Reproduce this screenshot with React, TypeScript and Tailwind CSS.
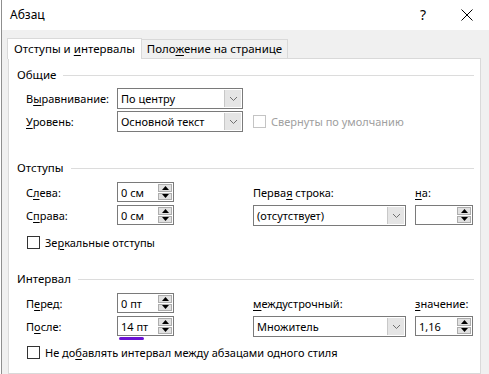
import React from 'react';

function U({ children }: { children: React.ReactNode }) {
  return <span className="underline underline-offset-2 decoration-1">{children}</span>;
}

function Chevron() {
  return (
    <svg width="9" height="6" viewBox="0 0 9 6" className="block">
      <path d="M1 1 L4.5 4.5 L8 1" fill="none" stroke="#707070" strokeWidth="1" />
    </svg>
  );
}

function Select({ value, width }: { value: string; width: string }) {
  return (
    <div className={`${width} h-[21px] border border-[#7a7a7a] bg-white flex items-stretch`}>
      <div className="flex-1 flex items-center pl-[3px] leading-none">{value}</div>
      <div className="w-[17px] m-px bg-[#e5e5e5] border-l border-[#c8c8c8] flex items-center justify-center">
        <Chevron />
      </div>
    </div>
  );
}

function Spin({ value, width = 'w-[57px]', underline = false }: { value: string; width?: string; underline?: boolean }) {
  return (
    <div className={`${width} h-[20px] border border-[#7a7a7a] bg-white flex items-stretch relative`}>
      <div className="flex-1 flex items-center pl-[3px] leading-none">{value}</div>
      {underline && (
        <div className="absolute left-[1px] top-[20px] w-[25px] h-[3px] rounded-full bg-[#6a12d4]" />
      )}
      <div className="w-[14px] my-px mr-px flex flex-col gap-px">
        <div className="flex-1 bg-[#e1e1e1] border border-[#adadad] flex items-center justify-center">
          <svg width="7" height="4" viewBox="0 0 7 4"><path d="M0 4 L3.5 0 L7 4 Z" fill="#000" /></svg>
        </div>
        <div className="flex-1 bg-[#e1e1e1] border border-[#adadad] flex items-center justify-center">
          <svg width="7" height="4" viewBox="0 0 7 4"><path d="M0 0 L3.5 4 L7 0 Z" fill="#000" /></svg>
        </div>
      </div>
    </div>
  );
}

function Check({ label, disabled = false }: { label: React.ReactNode; disabled?: boolean }) {
  return (
    <div className="flex items-center gap-[5px] h-[13px]">
      <div className={`w-[13px] h-[13px] border bg-white ${disabled ? 'border-[#c4c4c4]' : 'border-[#333333]'}`} />
      <span className={`leading-none ${disabled ? 'text-[#a0a0a0]' : 'text-black'}`}>{label}</span>
    </div>
  );
}

function Heading({ children }: { children: React.ReactNode }) {
  return (
    <div className="flex items-center h-4 pl-[8px] pr-[6px] gap-[7px]">
      <span className="leading-none text-[11.5px]">{children}</span>
      <div className="flex-1 h-px bg-[#dcdcdc]" />
    </div>
  );
}

export default function App() {
  return (
    <div className="w-[489px] h-[374px] flex bg-[#f0f0f0] text-[11px] text-black font-['Noto_Sans',sans-serif] overflow-hidden">
      <div className="w-px bg-white" />
      <div className="w-px bg-[#8f8f8f]" />
      <div className="flex-1 flex flex-col">
        {/* title bar */}
        <div className="h-[30px] bg-white flex items-center pl-[8px] shrink-0">
          <span className="text-[12px]">Абзац</span>
          <span className="ml-auto mr-[35px] text-[14px] leading-none">?</span>
          <svg width="12" height="12" viewBox="0 0 12 12" className="mr-[16px]">
            <path d="M0.5 0.5 L11.5 11.5 M11.5 0.5 L0.5 11.5" stroke="#000" strokeWidth="1" />
          </svg>
        </div>

        {/* tabs */}
        <div className="flex items-end pl-[5px] pt-[7px] h-[28px] shrink-0">
          <div className="w-[135px] h-[21px] bg-white border-t border-l border-r border-[#d9d9d9] flex items-center justify-center relative z-10 -mb-px">
            <span className="leading-none text-[11.5px]">Отступы и <U>и</U>нтервалы</span>
          </div>
          <div className="w-[146px] h-[19px] border-t border-r border-[#d9d9d9] flex items-center justify-center">
            <span className="leading-none text-[11.5px]">Поло<U>ж</U>ение на странице</span>
          </div>
        </div>

        {/* panel */}
        <div className="ml-[6px] w-[473px] flex-1 bg-white border border-[#d9d9d9] flex flex-col">
          <div className="mt-[8px]">
            <Heading>Общие</Heading>
          </div>
          <div className="mt-[5px] pl-[17px] flex flex-col gap-[2px]">
            <div className="flex items-center h-[21px]">
              <span className="w-[91px] leading-none">В<U>ы</U>равнивание:</span>
              <Select value="По центру" width="w-[126px]" />
            </div>
            <div className="flex items-center h-[21px]">
              <span className="w-[91px] leading-none"><U>У</U>ровень:</span>
              <Select value="Основной текст" width="w-[126px]" />
              <div className="ml-[10px]">
                <Check label="Свернуты по умолчанию" disabled />
              </div>
            </div>
          </div>

          <div className="mt-[28px]">
            <Heading>Отступы</Heading>
          </div>
          <div className="mt-[6px] pl-[17px] flex">
            <div className="flex flex-col gap-[3px]">
              <div className="flex items-center h-[20px]">
                <span className="w-[91px] leading-none">С<U>л</U>ева:</span>
                <Spin value="0 см" />
              </div>
              <div className="flex items-center h-[20px]">
                <span className="w-[91px] leading-none">С<U>п</U>рава:</span>
                <Spin value="0 см" />
              </div>
            </div>
            <div className="ml-[79px] flex flex-col gap-[3px]">
              <div className="h-[20px] flex items-center"><span className="leading-none">Перва<U>я</U> строка:</span></div>
              <Select value="(отсутствует)" width="w-[153px]" />
            </div>
            <div className="ml-[9px] flex flex-col gap-[3px]">
              <div className="h-[20px] flex items-center"><span className="leading-none"><U>н</U>а:</span></div>
              <Spin value="" width="w-[58px]" />
            </div>
          </div>
          <div className="mt-[10px] pl-[18px]">
            <Check label={<>Зе<U>р</U>кальные отступы</>} />
          </div>

          <div className="mt-[22px]">
            <Heading>Интервал</Heading>
          </div>
          <div className="mt-[6px] pl-[17px] flex">
            <div className="flex flex-col gap-[3px]">
              <div className="flex items-center h-[20px]">
                <span className="w-[91px] leading-none">П<U>е</U>ред:</span>
                <Spin value="0 пт" />
              </div>
              <div className="flex items-center h-[20px]">
                <span className="w-[91px] leading-none">П<U>о</U>сле:</span>
                <Spin value="14 пт" underline />
              </div>
            </div>
            <div className="ml-[79px] flex flex-col gap-[3px]">
              <div className="h-[20px] flex items-center"><span className="leading-none"><U>м</U>еждустрочный:</span></div>
              <Select value="Множитель" width="w-[153px]" />
            </div>
            <div className="ml-[9px] flex flex-col gap-[3px]">
              <div className="h-[20px] flex items-center"><span className="leading-none"><U>з</U>начение:</span></div>
              <Spin value="1,16" width="w-[58px]" />
            </div>
          </div>
          <div className="mt-[9px] pl-[18px]">
            <Check label={<>Не до<U>б</U>авлять интервал между абзацами одного стиля</>} />
          </div>
        </div>
      </div>
    </div>
  );
}
